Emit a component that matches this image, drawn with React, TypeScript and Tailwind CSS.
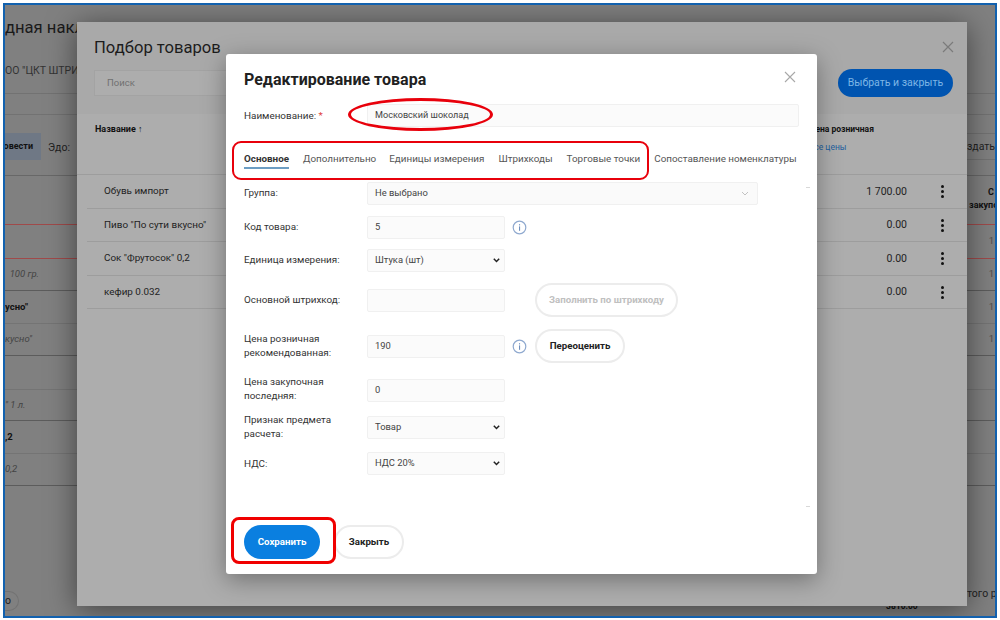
import React from "react";

const font = { fontFamily: "Roboto, 'Noto Sans', sans-serif" };

function BgRow({ left, right, kind, red, h = "h-[33px]" }: { left?: string; right?: string; kind: "bold" | "italic"; red?: boolean; h?: string }) {
  return (
    <div className={`${h} shrink-0 flex items-center justify-between border-b text-[9.5px] ${red ? "border-[#a04a4a]" : kind === "bold" ? "border-[#747474]" : "border-[#5c5c5c]"}`}>
      <span className={`whitespace-pre ${kind === "bold" ? "font-bold text-[#111]" : "italic text-[#444]"}`}>{left}</span>
      <span className="text-[#4d4d4d] pr-[1px]">{right}</span>
    </div>
  );
}

function PickRow({ name, price }: { name: string; price: string }) {
  return (
    <div className="h-[33.5px] ml-[10px] pt-[1px] flex items-center border-b border-[#9d9d9d] text-[10.5px] text-[#222]">
      <span className="ml-[17px] text-[9.9px]">{name}</span>
      <span className="ml-auto">{price}</span>
      <Dots />
    </div>
  );
}

function Dots() {
  return (
    <span className="w-[60px] flex justify-end pr-[23px]">
      <span className="flex flex-col gap-[2px]">
        <i className="block w-[3px] h-[3px] rounded-full bg-[#111]" />
        <i className="block w-[3px] h-[3px] rounded-full bg-[#111]" />
        <i className="block w-[3px] h-[3px] rounded-full bg-[#111]" />
      </span>
    </span>
  );
}

function Info() {
  return (
    <svg width="15" height="15" viewBox="0 0 15 15" className="ml-[7px] shrink-0" fill="none">
      <circle cx="7.5" cy="7.5" r="6.3" stroke="#8fa9cf" strokeWidth="1.2" />
      <rect x="7" y="6.4" width="1.1" height="4.4" fill="#6f8fbd" />
      <rect x="7" y="4.2" width="1.1" height="1.2" fill="#6f8fbd" />
    </svg>
  );
}

function Chev() {
  return (
    <svg width="7" height="5" viewBox="0 0 7 5" className="ml-auto -mr-[3px]" fill="none">
      <path d="M0.8 0.8l2.7 2.7L6.2 0.8" stroke="#222" strokeWidth="1.5" />
    </svg>
  );
}

function Field({ text, select, w = "w-[138px]", size = "text-[9.4px]" }: { text?: string; select?: boolean; w?: string; size?: string }) {
  return (
    <div className={`${w} h-[23px] shrink-0 flex items-center px-[7px] bg-[#fbfbfb] border border-[#f0f0f0] rounded-[2px] text-[#444] ${size}`}>
      <span>{text}</span>
      {select && <Chev />}
    </div>
  );
}

function Label({ children, up }: { children: React.ReactNode; up?: boolean }) {
  return <div className={`w-[123px] shrink-0 text-[9.9px] leading-[14px] text-[#333] ${up ? "pb-[2px]" : ""}`}>{children}</div>;
}

function Pill({ children, className }: { children: React.ReactNode; className: string }) {
  return <div className={`h-[34px] rounded-full flex items-center justify-center text-[9.7px] font-bold shrink-0 ${className}`}>{children}</div>;
}

export default function App() {
  return (
    <div style={font} className="w-[1000px] h-[620px] bg-white pt-[3px] pl-[3px] pr-[3px] pb-[2px] overflow-hidden">
      <div className="relative w-full h-full border-2 border-[#1261ae] bg-[#808080] overflow-hidden">
        {/* Background page */}
        <div className="h-full flex flex-col">
          <div className="h-[89px] shrink-0 border-b border-[#727272] pt-[12px]">
            <div className="text-[16.6px] leading-[22px] text-[#1a1a1a] whitespace-nowrap">дная накл</div>
            <div className="mt-[26px] text-[10.5px] leading-[12px] text-[#333]">ОО "ЦКТ ШТРИ</div>
          </div>
          <div className="h-[21px] shrink-0 border-b border-[#727272]" />
          <div className="h-[61px] shrink-0 border-b border-[#686868] flex items-start pt-[18px] text-[9px]">
            <div className="w-[36px] h-[27px] bg-[#6f7885] flex items-center justify-end pr-[8px] font-bold text-[#111]">овести</div>
            <div className="ml-[7px] mt-[7px] text-[10.5px] text-[#222]">Эдо:</div>
            <div className="ml-auto w-[28px] h-[27px] border-y border-[#727272] flex items-center text-[#222] text-[10.5px] overflow-hidden whitespace-nowrap">здать н</div>
          </div>
          <div className="h-[49px] shrink-0 border-b border-[#a04a4a] flex flex-col items-end pt-[10px] text-[9px] leading-[13px] font-bold text-[#111]">
            <span className="pr-[1px]">С</span>
            <span className="w-[26px] overflow-hidden whitespace-nowrap">закупо</span>
          </div>
          <BgRow kind="bold" right="1" red h="h-[34px]" />
          <BgRow kind="italic" left={"\u00a0\u00a0100 гр."} right="1" h="h-[32px]" />
          <BgRow kind="bold" left="усно&quot;" right="1" />
          <BgRow kind="italic" left="кусно&quot;" right="1" h="h-[32px]" />
          <BgRow kind="bold" h="h-[34px]" />
          <BgRow kind="italic" left="&quot; 1 л." h="h-[31px]" />
          <BgRow kind="bold" left=",2" />
          <BgRow kind="italic" left="0,2" h="h-[32px]" />
          <div className="flex-1 flex items-end justify-between pb-[5px] text-[10.5px] text-[#222]">
            <div className="w-[14px] h-[20px] rounded-r-full border border-l-0 border-[#727272] flex items-center">о</div>
            <div className="w-[28px] overflow-hidden whitespace-nowrap pb-[9px]">того ро</div>
          </div>
        </div>
        <div className="absolute left-[881px] top-[594px] text-[8.5px] leading-[15px] font-bold text-[#111]">3810.00</div>

        {/* Picker modal */}
        <div className="absolute left-[72px] top-[17px] w-[890px] h-[584px] rounded-[3px] bg-[#ababab] shadow-[0_4px_30px_rgba(0,0,0,0.5)] flex flex-col">
          <div className="h-[92px] shrink-0 bg-[#a9a9a9] relative pl-[17px] pt-[15px]">
            <div className="text-[16.6px] leading-[22px] text-[#1c1c1c]">Подбор товаров</div>
            <div className="mt-[11px] w-[300px] h-[26px] flex items-center pl-[12px] bg-[#adadad] border border-[#a3a3a3] text-[9.5px] text-[#707070]">Поиск</div>
            <svg width="12" height="12" viewBox="0 0 12 12" className="absolute right-[13px] top-[19px]" fill="none">
              <path d="M1 1l10 10M11 1L1 11" stroke="#7b7b7b" strokeWidth="1.2" />
            </svg>
            <div className="absolute right-[14px] top-[47px] w-[115px] h-[28px] rounded-full bg-[#0054b0] flex items-center justify-center text-[10.5px] text-[#7db6e6]">Выбрать и закрыть</div>
          </div>
          <div className="h-[61px] shrink-0 flex justify-between border-b border-[#9d9d9d] pt-[9px] pl-[18px] text-[9px] font-bold text-[#111] bg-[#adadad]">
            <span>Название ↑</span>
            <div className="w-[158px] flex flex-col text-[8.5px]">
              <span>Цена розничная</span>
              <span className="mt-[5px] font-normal text-[#1e5f9e]">Все цены</span>
            </div>
          </div>
          <div className="flex-1 bg-[#adadad]">
            <PickRow name="Обувь импорт" price="1 700.00" />
            <PickRow name={'Пиво "По сути вкусно"'} price="0.00" />
            <PickRow name={'Сок "Фрутосок" 0,2'} price="0.00" />
            <PickRow name="кефир 0.032" price="0.00" />
          </div>
        </div>

        {/* Edit modal */}
        <div className="absolute left-[221px] top-[49px] w-[591px] h-[520px] rounded-[3px] bg-white shadow-[0_6px_24px_rgba(0,0,0,0.35)] flex flex-col pl-[18px] pr-[18px]">
          <div className="mt-[16px] h-[20px] flex items-center justify-between">
            <div className="text-[16px] leading-[20px] font-bold text-[#212121]">Редактирование товара</div>
            <svg width="12" height="12" viewBox="0 0 12 12" className="mr-[3px] -mt-[6px]" fill="none">
              <path d="M1 1l10 10M11 1L1 11" stroke="#a8a8a8" strokeWidth="1.1" />
            </svg>
          </div>
          <div className="mt-[14px] flex items-center">
            <Label>Наименование: <span className="text-[#e04040]">*</span></Label>
            <Field text="Московский шоколад" w="w-[432px]" size="text-[9.1px]" />
          </div>
          <div className="mt-[24px] flex text-[9.85px] text-[#555] whitespace-nowrap h-[20px]">
            <div className="h-[18px] border-b-2 border-[#6c9dc3] leading-[15px] font-bold text-[#333] mr-[14px]">Основное</div>
            <div className="mr-[13px] leading-[15px]">Дополнительно</div>
            <div className="mr-[14px] leading-[15px]">Единицы измерения</div>
            <div className="mr-[14px] leading-[15px]">Штрихкоды</div>
            <div className="mr-[14px] leading-[15px]">Торговые точки</div>
            <div className="leading-[15px]">Сопоставление номенклатуры</div>
          </div>
          <div className="mt-[11px] flex items-center">
            <Label up>Группа:</Label>
            <div className="w-[391px] h-[23px] flex items-center px-[7px] bg-[#fafafa] border border-[#f0f0f0] rounded-[2px] text-[9.4px] text-[#444]">
              <span>Не выбрано</span>
              <svg width="8" height="5" viewBox="0 0 8 5" className="ml-auto mr-[1px]" fill="none">
                <path d="M1 1l3 3 3-3" stroke="#c2c2c2" strokeWidth="1" />
              </svg>
            </div>
          </div>
          <div className="mt-[11px] flex items-center">
            <Label up>Код товара:</Label>
            <Field text="5" />
            <Info />
          </div>
          <div className="mt-[10px] flex items-center">
            <Label up>Единица измерения:</Label>
            <Field text="Штука (шт)" select />
          </div>
          <div className="mt-[11px] flex items-center">
            <Label>Основной штрихкод:</Label>
            <Field />
            <Pill className="ml-[30px] w-[143px] border-2 border-[#ececec] text-[#c0c0c0]">Заполнить по штрихкоду</Pill>
          </div>
          <div className="mt-[12px] flex items-center">
            <Label>Цена розничная рекомендованная:</Label>
            <Field text="190" />
            <Info />
            <Pill className="ml-[8px] w-[90px] border-2 border-[#ececec] text-[#222]">Переоценить</Pill>
          </div>
          <div className="mt-[12px] flex items-center">
            <Label up>Цена закупочная последняя:</Label>
            <Field text="0" />
          </div>
          <div className="mt-[8px] flex items-center">
            <Label>Признак предмета расчета:</Label>
            <Field text="Товар" select />
          </div>
          <div className="mt-[11px] flex items-center">
            <Label>НДС:</Label>
            <Field text="НДС 20%" select />
          </div>
          <div className="mt-auto mb-[15px] flex">
            <Pill className="w-[76px] bg-[#0a7fe0] text-white">Сохранить</Pill>
            <Pill className="ml-[14px] w-[70px] border-2 border-[#ececec] text-[#222]">Закрыть</Pill>
          </div>
          <div className="absolute left-[580px] top-[133px] w-[4px] h-[1px] bg-[#d8d8d8]" />
          <div className="absolute left-[580px] top-[452px] w-[4px] h-[1px] bg-[#d8d8d8]" />
        </div>

        {/* Red annotations */}
        <div className="absolute left-[343px] top-[93px] w-[145px] h-[33px] rounded-[50%] border-[3px] border-[#e8000b]" />
        <div className="absolute left-[227px] top-[136px] w-[417px] h-[39px] rounded-[9px] border-2 border-[#e8000b]" />
        <div className="absolute left-[226px] top-[512px] w-[105px] h-[47px] rounded-[8px] border-[3px] border-[#f00000]" />
      </div>
    </div>
  );
}
